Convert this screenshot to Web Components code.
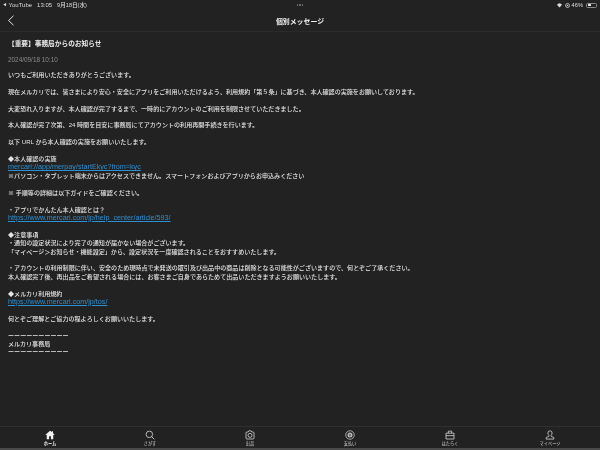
<!DOCTYPE html>
<html lang="ja">
<head>
<meta charset="utf-8">
<title>個別メッセージ</title>
<style>
  html, body { margin: 0; height: 100%; background: #222; }
  body {
    width: 600px; height: 450px; overflow: hidden;
    display: flex; flex-direction: column;
    font-family: "Liberation Sans", "Noto Sans CJK JP", sans-serif;
    color: #e2e2e2;
    filter: blur(.25px);
  }
  message-view { flex: 1; min-height: 0; }
</style>
</head>
<body>
<status-bar></status-bar>
<nav-header heading="個別メッセージ"></nav-header>
<message-view heading="【重要】事務局からのお知らせ" date="2024/09/18 10:10">いつもご利用いただきありがとうございます。

現在メルカリでは、皆さまにより安心・安全にアプリをご利用いただけるよう、利用規約「第５条」に基づき、本人確認の実施をお願いしております。

大変恐れ入りますが、本人確認が完了するまで、一時的にアカウントのご利用を制限させていただきました。

本人確認が完了次第、24 時間を目安に事務局にてアカウントの利用再開手続きを行います。

以下 URL から本人確認の実施をお願いいたします。

◆本人確認の実施
<a href="#">mercari://app/merpay/startEkyc?from=kyc</a>
※パソコン・タブレット端末からはアクセスできません。スマートフォンおよびアプリからお申込みください

※ 手順等の詳細は以下ガイドをご確認ください。

・アプリでかんたん本人確認とは？
<a href="#">https://www.mercari.com/jp/help_center/article/593/</a>

◆注意事項
・通知の設定状況により完了の通知が届かない場合がございます。
「マイページ＞お知らせ・機能設定」から、設定状況を一度確認されることをおすすめいたします。

・アカウントの利用制限に伴い、安全のため現時点で未発送の取引及び出品中の商品は削除となる可能性がございますので、何とぞご了承ください。
本人確認完了後、再出品をご希望される場合には、お客さまご自身であらためて出品いただきますようお願いいたします。

◆メルカリ利用規約
<a href="#">https://www.mercari.com/jp/tos/</a>

何とぞご理解とご協力の程よろしくお願いいたします。

ーーーーーーーーーー
メルカリ事務局
ーーーーーーーーーー</message-view>
<tab-bar>
  <tab-item label="ホーム" active>
    <svg viewBox="0 0 12 12"><path fill="#f2f2f2" d="M6 .8.6 5.6l.6.7.9-.8V11h2.800V7.600h2.200V11h2.800V5.500l.9.8.6-.7L9.600 3.600V1.400H8.400v1.100z"/></svg>
  </tab-item>
  <tab-item label="さがす">
    <svg viewBox="0 0 12 12"><circle cx="5.2" cy="5.2" r="3.9" fill="none" stroke="#d0d0d0" stroke-width="1"/><path stroke="#d0d0d0" stroke-width="1.1" d="M8 8l3.2 3.2"/></svg>
  </tab-item>
  <tab-item label="出品">
    <svg viewBox="0 0 12 12"><path fill="none" stroke="#d0d0d0" d="M2.400 2.400h1.400L4.600 1h2.800l.8 1.400h1.400a1.200 1.200 0 0 1 1.200 1.200v6a1.200 1.200 0 0 1-1.200 1.200H2.400a1.200 1.200 0 0 1-1.200-1.200v-6a1.200 1.200 0 0 1 1.200-1.200z"/><circle cx="6" cy="6.4" r="2.4" fill="none" stroke="#d0d0d0"/></svg>
  </tab-item>
  <tab-item label="支払い">
    <svg viewBox="0 0 12 12"><circle cx="6" cy="6" r="5.1" fill="none" stroke="#d0d0d0" stroke-width=".9"/><circle cx="6" cy="6" r="3" fill="#bdbdbd"/><path stroke="#333" stroke-width=".6" fill="none" d="M4.600 4.400 6 6l1.400-1.600M6 6v2M4.800 6.400h2.400"/></svg>
  </tab-item>
  <tab-item label="はたらく">
    <svg viewBox="0 0 12 12"><path fill="none" stroke="#d0d0d0" d="M1.200 3.800h9.600v7H1.200zM4 3.800V1.400h4v2.400M1.200 6.800h9.600"/></svg>
  </tab-item>
  <tab-item label="マイページ">
    <svg viewBox="0 0 12 12"><path fill="none" stroke="#d0d0d0" d="M6 1a2.500 2.500 0 0 0-2.500 2.600c0 1.200.5 2.200 1.200 2.900v1L1.400 9v1.900h9.200V9L7.300 7.500v-1c.7-.7 1.200-1.700 1.200-2.900A2.500 2.500 0 0 0 6 1z"/></svg>
  </tab-item>
</tab-bar>

<script>
class StatusBar extends HTMLElement {
  constructor() {
    super();
    this.attachShadow({ mode: 'open' });
  }
  connectedCallback() {
    this.shadowRoot.innerHTML = `
      <style>
        :host {
          display: grid;
          grid-template-columns: 1fr auto 1fr;
          align-items: center;
          height: 10px;
          padding: 0 3px;
          font-size: 6px;
          line-height: 8px;
          font-weight: 500;
          color: #dcdcdc;
        }
        .left { display: flex; gap: 5px; align-items: center; }
        .back { margin-right: -3px; font-size: 3.5px; }
        .date { font-size: 5.6px; }
        .dots { display: flex; gap: 1px; }
        .dots i { width: 1.5px; height: 1.5px; border-radius: 50%; background: #777; }
        .right { display: flex; gap: 3px; align-items: center; justify-content: flex-end; }
        .pct { font-size: 5.7px; margin-left: -1px; }
        svg { display: block; width: 5px; height: 5px; }
        .battery {
          width: 11px; height: 5px; border: .5px solid #888; border-radius: 1.5px;
          padding: .5px; box-sizing: border-box; display: flex;
        }
        .battery i { width: 46%; background: #eee; border-radius: .5px; }
      </style>
      <div class="left">
        <span class="back">◀</span><span>YouTube</span><span>13:05</span><span class="date">9月18日(水)</span>
      </div>
      <div class="dots"><i></i><i></i><i></i></div>
      <div class="right">
        <svg viewBox="0 0 10 10"><path fill="#ddd" d="M5 9 0 3.500C3-.5 7-.5 10 3.500z"/></svg>
        <svg viewBox="0 0 10 10"><circle cx="5" cy="5" r="4" fill="none" stroke="#ddd" stroke-width="1.500"/><circle cx="5" cy="5" r="1.500" fill="#ddd"/></svg>
        <span class="pct">46%</span>
        <div class="battery"><i></i></div>
      </div>`;
  }
}

class NavHeader extends HTMLElement {
  constructor() {
    super();
    this.attachShadow({ mode: 'open' });
  }
  connectedCallback() {
    this.shadowRoot.innerHTML = `
      <style>
        :host {
          display: grid;
          grid-template-columns: 1fr auto 1fr;
          align-items: center;
          height: 21px;
          padding: 0 7px;
          border-bottom: 1px solid #2b2b2b;
        }
        h1 { margin: 0; font-size: 6.9px; font-weight: 700; color: #efefef; }
        svg { display: block; width: 8px; height: 11px; }
      </style>
      <svg viewBox="0 0 8 11"><path d="M6.500.8 1.500 5.500l5 4.700" fill="none" stroke="#e0e0e0" stroke-width="1"/></svg>
      <h1>${this.getAttribute('heading')}</h1>
      <span></span>`;
  }
}

class MessageView extends HTMLElement {
  constructor() {
    super();
    this.attachShadow({ mode: 'open' });
    this.rawBody = this.innerHTML;
  }
  connectedCallback() {
    this.shadowRoot.innerHTML = `
      <style>
        :host { display: block; padding: 7px 8px 0; }
        h2 { margin: 0; font-size: 6.7px; line-height: 9px; font-weight: 700; color: #efefef; }
        time { display: block; margin-top: 7px; font-size: 6.4px; line-height: 9px; color: #8c8c8c; }
        .body {
          margin-top: 7px;
          white-space: pre;
          font-size: 6.07px;
          line-height: 8.4px;
          font-weight: 500;
          color: #e4e4e4;
        }
        a { color: #2e8fd0; text-decoration: underline; font-size: 7.2px; line-height: 0; }
      </style>
      <h2>${this.getAttribute('heading')}</h2>
      <time>${this.getAttribute('date')}</time>
      <div class="body">${this.rawBody}</div>`;
  }
}

class TabBar extends HTMLElement {
  constructor() {
    super();
    this.attachShadow({ mode: 'open' });
  }
  connectedCallback() {
    this.shadowRoot.innerHTML = `
      <style>
        :host {
          display: grid;
          grid-template-columns: repeat(6, 1fr);
          height: 21px;
          border-top: 1px solid #2f2f2f;
          border-bottom: 2px solid #4a4a4a;
        }
      </style>
      <slot></slot>`;
  }
}

class TabItem extends HTMLElement {
  constructor() {
    super();
    this.attachShadow({ mode: 'open' });
  }
  connectedCallback() {
    this.shadowRoot.innerHTML = `
      <style>
        :host {
          display: flex;
          flex-direction: column;
          align-items: center;
          gap: 1px;
          padding-top: 3px;
          font-size: 4.2px;
          line-height: 5px;
          color: #d0d0d0;
        }
        :host([active]) { color: #f4f4f4; font-weight: 700; }
        ::slotted(svg) { display: block; width: 10px; height: 10px; }
      </style>
      <slot></slot>
      <span>${this.getAttribute('label')}</span>`;
  }
}

customElements.define('status-bar', StatusBar);
customElements.define('nav-header', NavHeader);
customElements.define('message-view', MessageView);
customElements.define('tab-bar', TabBar);
customElements.define('tab-item', TabItem);
</script>
</body>
</html>
